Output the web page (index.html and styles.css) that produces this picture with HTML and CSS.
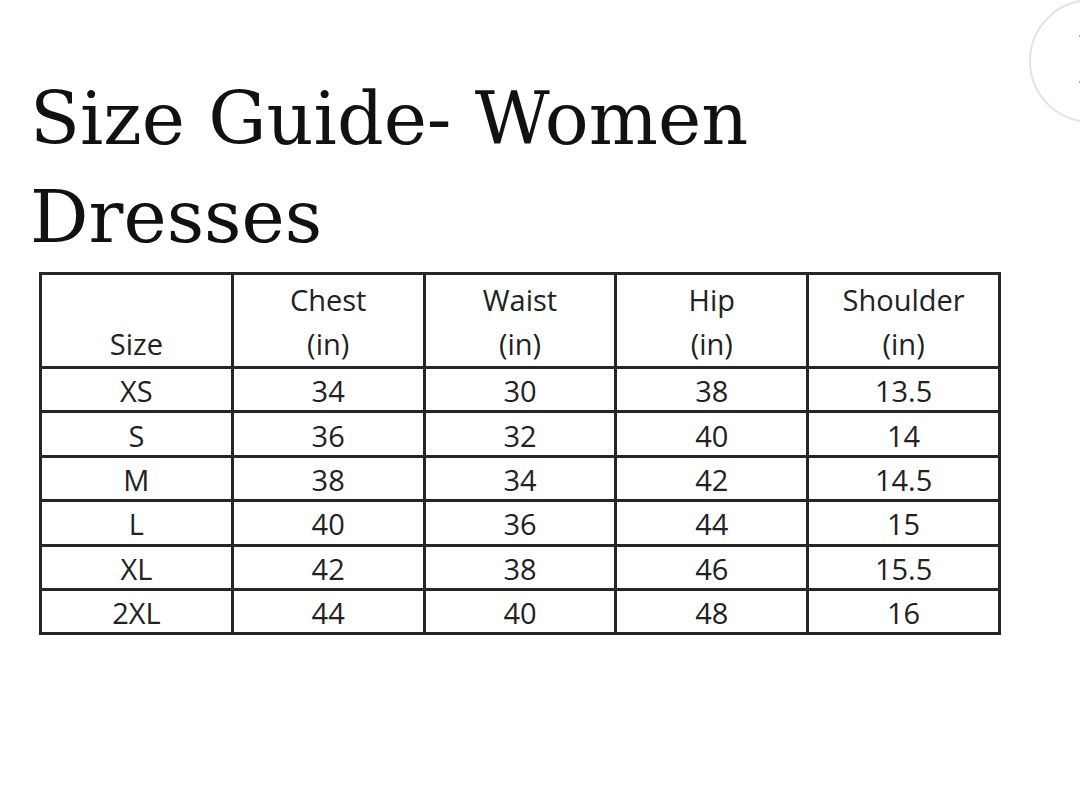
FILE: index.html
```html
<!DOCTYPE html>
<html lang="en">
<head>
<meta charset="utf-8">
<title>Size Guide- Women Dresses</title>
<link rel="stylesheet" href="styles.css">
</head>
<body>
<div class="frame">
<main class="page">
  <h1 class="title">Size Guide- Women Dresses</h1>
  <table class="size-table">
    <thead>
      <tr>
        <th class="first">Size</th>
        <th>Chest<br>(in)</th>
        <th>Waist<br>(in)</th>
        <th>Hip<br>(in)</th>
        <th>Shoulder<br>(in)</th>
      </tr>
    </thead>
    <tbody>
      <tr><td>XS</td><td>34</td><td>30</td><td>38</td><td>13.5</td></tr>
      <tr><td>S</td><td>36</td><td>32</td><td>40</td><td>14</td></tr>
      <tr><td>M</td><td>38</td><td>34</td><td>42</td><td>14.5</td></tr>
      <tr><td>L</td><td>40</td><td>36</td><td>44</td><td>15</td></tr>
      <tr><td>XL</td><td>42</td><td>38</td><td>46</td><td>15.5</td></tr>
      <tr><td>2XL</td><td>44</td><td>40</td><td>48</td><td>16</td></tr>
    </tbody>
  </table>
</main>
<button class="close-btn" aria-label="Close">
  <svg width="60" height="60" viewBox="0 0 60 60" aria-hidden="true">
    <path d="M6 6 L52 52 M52 6 L6 52" stroke="#333" stroke-width="3" fill="none" stroke-linecap="round"/>
  </svg>
</button>
</div>
</body>
</html>
```

FILE: styles.css
```css
html, body {
  margin: 0;
  padding: 0;
  background: #ffffff;
}

.frame {
  position: relative;
  width: 1080px;
  height: 792px;
  overflow: hidden;
}

.page {
  padding: 70px 0 0 30px;
}

.title {
  margin: 0;
  width: 760px;
  font-family: "DejaVu Serif", "Liberation Serif", serif;
  font-weight: normal;
  font-size: 73px;
  line-height: 98px;
  color: #111;
}

.size-table {
  margin: 6px 0 0 9px;
  width: 962px;
  border-collapse: collapse;
  table-layout: fixed;
  font-family: "Open Sans", "Liberation Sans", sans-serif;
  font-size: 29px;
  color: #222;
}

.size-table th,
.size-table td {
  border: 3px solid #262626;
  text-align: center;
  padding: 0;
  font-weight: normal;
}

.size-table th {
  height: 91px;
  vertical-align: bottom;
  line-height: 44px;
  padding-bottom: 0;
}

.size-table td {
  height: 39.4px;
  line-height: 39px;
  padding-top: 2px;
}

.close-btn {
  position: absolute;
  left: 1029px;
  top: -1px;
  width: 124px;
  height: 124px;
  border-radius: 50%;
  border: 2px solid #e2e2e2;
  background: #fff;
  padding: 0;
  box-sizing: border-box;
}

.close-btn svg {
  position: absolute;
  left: 44px;
  top: 29px;
}
```
